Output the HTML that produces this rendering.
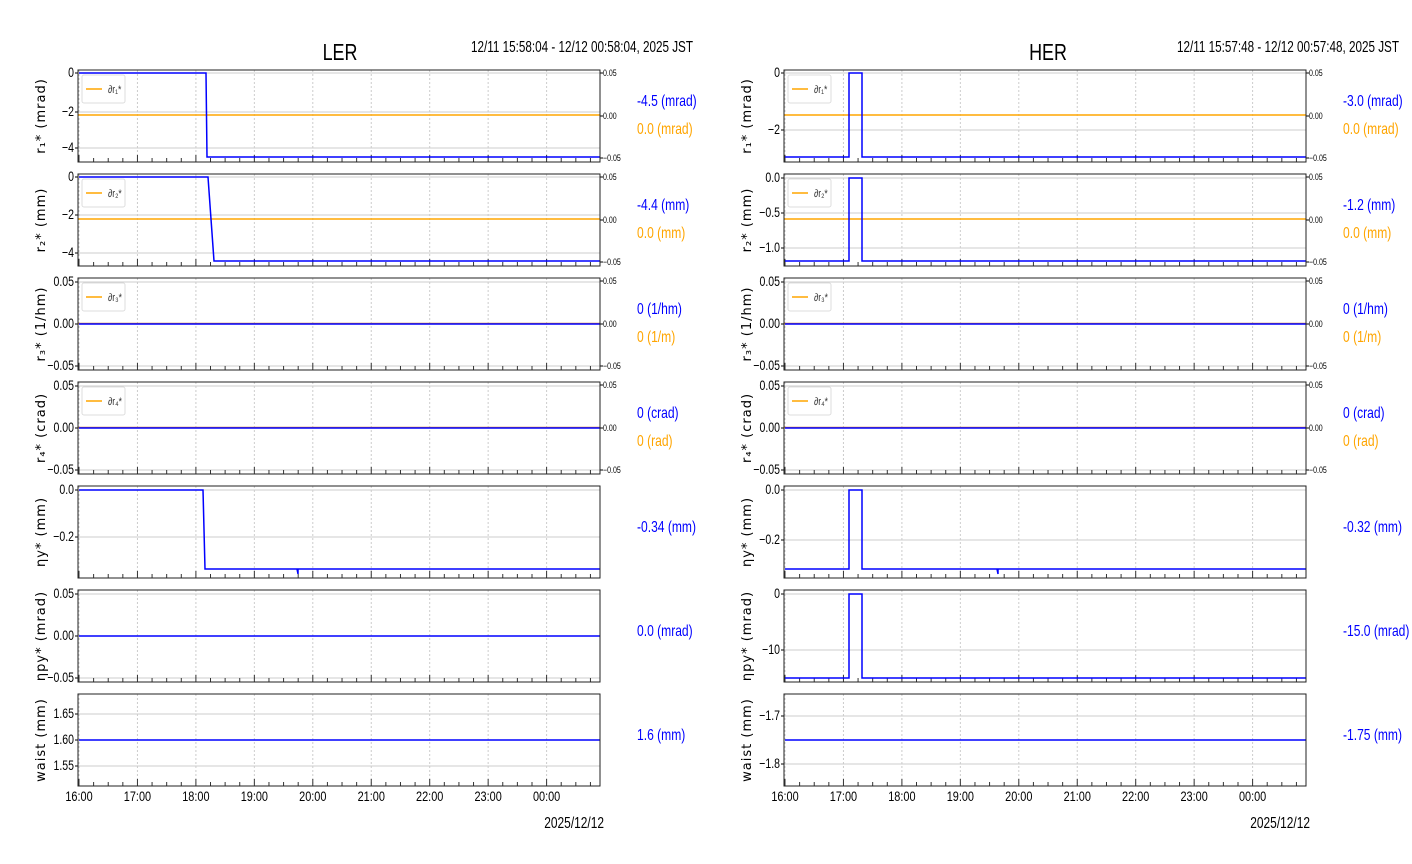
<!DOCTYPE html>
<html><head><meta charset="utf-8"><style>
html,body{margin:0;padding:0;background:#fff;width:1412px;height:864px;overflow:hidden}
svg text{font-family:"Liberation Sans",sans-serif}
</style></head><body>
<svg id="s" width="1412" height="864" xmlns="http://www.w3.org/2000/svg">
<text transform="translate(340,60) scale(0.78,1)" font-size="23" text-anchor="middle">LER</text>
<text transform="translate(1048,60) scale(0.78,1)" font-size="23" text-anchor="middle">HER</text>
<text transform="translate(693,52) scale(0.76,1)" font-size="15.4" text-anchor="end">12/11 15:58:04 - 12/12 00:58:04, 2025 JST</text>
<text transform="translate(1399,52) scale(0.76,1)" font-size="15.4" text-anchor="end">12/11 15:57:48 - 12/12 00:57:48, 2025 JST</text>
<text transform="translate(604,828) scale(0.78,1)" font-size="15.3" text-anchor="end">2025/12/12</text>
<text transform="translate(1310,828) scale(0.78,1)" font-size="15.3" text-anchor="end">2025/12/12</text>
</svg>
<script>
const s=document.getElementById('s');const NS='http://www.w3.org/2000/svg';
function el(t,a,txt){const e=document.createElementNS(NS,t);for(const k in a)e.setAttribute(k,a[k]);if(txt!=null)e.textContent=txt;s.appendChild(e);return e;}
function tx(x,y,t,a){return el('text',Object.assign({transform:`translate(${x},${y}) scale(0.78,1)`,'font-size':12},a||{}),t);}
const hours=['16:00','17:00','18:00','19:00','20:00','21:00','22:00','23:00','00:00'];
const ylab=['r₁* (mrad)','r₂* (mm)','r₃* (1/hm)','r₄* (crad)','ηy* (mm)','ηpy* (mrad)','waist (mm)'];
const leg=['∂r₁*','∂r₂*','∂r₃*','∂r₄*'];
const L=[
 {yt:[['0',73],['−2',112],['−4',148]],blue:'79,73 206,73 207,157 600,157',or:115,lb:['-4.5 (mrad)','0.0 (mrad)']},
 {yt:[['0',177],['−2',215],['−4',253]],blue:'79,177 208,177 214,261 600,261',or:219,lb:['-4.4 (mm)','0.0 (mm)']},
 {yt:[['0.05',282],['0.00',324],['−0.05',366]],blue:'79,324 600,324',or:323.5,lb:['0 (1/hm)','0 (1/m)']},
 {yt:[['0.05',386],['0.00',428],['−0.05',470]],blue:'79,428 600,428',or:427.5,lb:['0 (crad)','0 (rad)']},
 {yt:[['0.0',490],['−0.2',537]],blue:'79,490 203,490 205,569 297,569 298,574 298,569 600,569',lb:['-0.34 (mm)']},
 {yt:[['0.05',594],['0.00',636],['−0.05',678]],blue:'79,636 600,636',lb:['0.0 (mrad)']},
 {yt:[['1.65',714],['1.60',740],['1.55',766]],blue:'79,740 600,740',lb:['1.6 (mm)']}];
function pulse(base,top,x0){return `${x0},${base} 849,${base} 849,${top} 862,${top} 862,${base} 1306,${base}`;}
const R=[
 {yt:[['0',73],['−2',130]],blue:pulse(157,73,785),or:115,lb:['-3.0 (mrad)','0.0 (mrad)']},
 {yt:[['0.0',178],['−0.5',213],['−1.0',248]],blue:pulse(261,178,785),or:219,lb:['-1.2 (mm)','0.0 (mm)']},
 {yt:[['0.05',282],['0.00',324],['−0.05',366]],blue:'785,324 1306,324',or:323.5,lb:['0 (1/hm)','0 (1/m)']},
 {yt:[['0.05',386],['0.00',428],['−0.05',470]],blue:'785,428 1306,428',or:427.5,lb:['0 (crad)','0 (rad)']},
 {yt:[['0.0',490],['−0.2',540]],blue:pulse(569,490,785)+' 997,569 998,574 998,569',lb:['-0.32 (mm)']},
 {yt:[['0',594],['−10',650]],blue:pulse(678,594,785),lb:['-15.0 (mrad)']},
 {yt:[['−1.7',716],['−1.8',764]],blue:'785,740 1306,740',lb:['-1.75 (mm)']}];
[[L,78,600,79],[R,784,1306,785]].forEach(([D,x0,x1,h0])=>{
 const dx=58.45;
 D.forEach((d,i)=>{
  const t=70+104*i,b=t+92;
  for(let k=0;k<9;k++){const x=h0+k*dx;el('line',{x1:x,y1:t,x2:x,y2:b,stroke:'#ccc','stroke-dasharray':'2,2','stroke-width':1});}
  d.yt.forEach(([l,y])=>{el('line',{x1:x0,y1:y,x2:x1,y2:y,stroke:'#ccc','stroke-width':1});
   el('line',{x1:x0-3,y1:y,x2:x0,y2:y,stroke:'#000'});tx(x0-4,y+4,l,{'text-anchor':'end','font-size':13.5});});
  for(let k=0;k<36;k++){const x=h0+k*dx/4;if(x>x1)break;const big=k%4==0;el('line',{x1:x,y1:b,x2:x,y2:b-(big?7:4),stroke:'#333','stroke-width':1});}
  if(d.or!=null){
   el('line',{x1:x0,y1:d.or,x2:x1,y2:d.or,stroke:(i>=2?'#d08040':'orange'),'stroke-width':1.5});
   [['0.05',t+3],['0.00',t+46],['−0.05',t+88]].forEach(([l,y])=>{el('line',{x1:x1,y1:y,x2:x1+3,y2:y,stroke:'#000'});tx(x1+3,y+3,l,{'font-size':9});});
   el('rect',{x:x0+4,y:t+5,width:43,height:28,rx:2,fill:'#fff',stroke:'#ddd'});
   el('line',{x1:x0+8,y1:t+19,x2:x0+24,y2:t+19,stroke:'orange','stroke-width':1.5});
   tx(x0+30,t+23,leg[i],{'font-size':11,fill:'#333'});
  }
  el('polyline',{points:d.blue,fill:'none',stroke:'#00f','stroke-width':1.5});
  el('rect',{x:x0,y:t,width:x1-x0,height:92,fill:'none',stroke:'#222','stroke-width':1});
  const lx=x1+37;
  if(d.lb.length==2){tx(lx,t+36,d.lb[0],{fill:'#00f','font-size':15.5});tx(lx,t+64,d.lb[1],{fill:'orange','font-size':15.5});}
  else tx(lx,t+46,d.lb[0],{fill:'#00f','font-size':15.5});
  const yl=el('text',{x:0,y:0,'font-size':13,'text-anchor':'middle',transform:`translate(${x0-33},${t+46}) rotate(-90)`,'letter-spacing':'1'},ylab[i]);
  yl.style.fontFamily='"DejaVu Sans",sans-serif';
 });
 hours.forEach((h,k)=>tx(h0+k*dx,801,h,{'text-anchor':'middle','font-size':14}));
});
</script>
</body></html>
